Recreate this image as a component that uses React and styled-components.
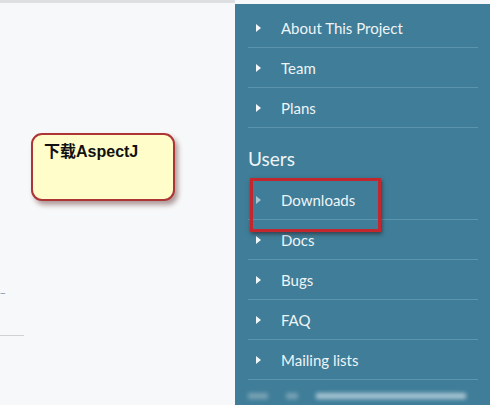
import React from 'react';
import styled, { createGlobalStyle } from 'styled-components';

const GlobalStyle = createGlobalStyle`
  html, body { margin: 0; padding: 0; }
  body { background: #f7f8f9; font-family: Lato, "Noto Sans", sans-serif; }
`;

const Page = styled.div`
  position: relative;
  width: 490px;
  height: 405px;
  overflow: hidden;
  display: grid;
  grid-template-columns: 235px 255px;
  background: #f7f8f9;
`;

const Main = styled.div`
  border-top: 3px solid #dedfe0;
  position: relative;
`;

const Dots = styled.div`
  position: absolute;
  left: 0;
  top: 283px;
  font-size: 8px;
  color: #6b8fa6;
  letter-spacing: -1px;
`;

const Rule = styled.div`
  position: absolute;
  left: 0;
  top: 332px;
  width: 24px;
  height: 1px;
  background: #cfd2d4;
`;

const Sidebar = styled.nav`
  margin-top: 4px;
  background: #3f7d98;
  padding: 4px 12px 0 13px;
  display: flex;
  flex-direction: column;
`;

const Item = styled.div`
  height: 40px;
  flex-shrink: 0;
  display: flex;
  align-items: center;
  border-bottom: 1px solid #5b95ad;
  color: #eef4f7;
  font-size: 15px;
  box-sizing: border-box;
`;

const Arrow = styled.span`
  width: 0;
  height: 0;
  border-top: 4px solid transparent;
  border-bottom: 4px solid transparent;
  border-left: 5px solid #f2f6f8;
  margin: 0 20px 0 8px;
  opacity: ${p => (p.$dim ? 0.6 : 1)};
`;

const Heading = styled.div`
  color: #eef4f7;
  font-size: 19px;
  height: 52px;
  flex-shrink: 0;
  display: flex;
  align-items: flex-end;
  padding-bottom: 10px;
  box-sizing: border-box;
`;

const Blur = styled.div`
  margin-top: 12px;
  height: 8px;
  display: flex;
  gap: 18px;
  align-items: center;
`;

const BlurBit = styled.span`
  width: ${p => p.$w}px;
  height: 6px;
  background: ${p => p.$c};
  filter: blur(2px);
`;

const Callout = styled.div`
  position: absolute;
  left: 31px;
  top: 133px;
  width: 144px;
  height: 68px;
  background: #fffecb;
  border: 2px solid #ad3535;
  border-radius: 11px;
  box-shadow: 3px 4px 5px rgba(90, 40, 40, 0.45);
  font-family: "Liberation Sans", "Noto Sans CJK SC", sans-serif;
  font-weight: bold;
  font-size: 16px;
  color: #111;
  padding: 3px 0 0 11px;
  box-sizing: border-box;
`;

const Highlight = styled.div`
  position: absolute;
  left: 250px;
  top: 178px;
  width: 131px;
  height: 54px;
  border: 3px solid #c1272d;
  box-sizing: border-box;
  box-shadow: 1px 2px 4px rgba(40, 0, 0, 0.5);
`;

const top = ['About This Project', 'Team', 'Plans'];
const users = ['Downloads', 'Docs', 'Bugs', 'FAQ', 'Mailing lists'];

export default function App() {
  return (
    <Page>
      <GlobalStyle />
      <Main>
        <Dots>.....</Dots>
        <Rule />
      </Main>
      <Sidebar>
        {top.map(t => (
          <Item key={t}><Arrow />{t}</Item>
        ))}
        <Heading>Users</Heading>
        {users.map(t => (
          <Item key={t}><Arrow $dim={t === 'Downloads'} />{t}</Item>
        ))}
        <Blur>
          <BlurBit $w={20} $c="#7aa3b5" />
          <BlurBit $w={12} $c="#7aa3b5" />
          <BlurBit $w={150} $c="#a9c6d3" />
        </Blur>
      </Sidebar>
      <Callout>下载AspectJ</Callout>
      <Highlight />
    </Page>
  );
}
